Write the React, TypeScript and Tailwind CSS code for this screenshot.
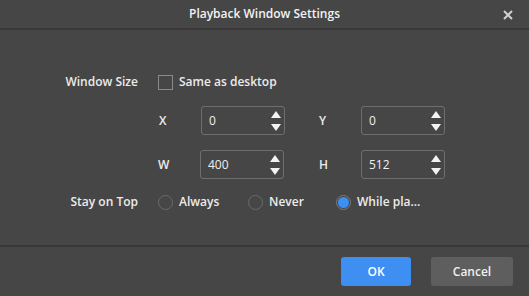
import { useState } from 'react';

const font = { fontFamily: '"Open Sans", "Noto Sans", Arial, sans-serif' };

const Spinner = () => (
  <div className="flex flex-col items-center gap-[6px] pr-[3px]">
    <svg width="10" height="7" viewBox="0 0 10 7">
      <polygon points="5,0 10,7 0,7" fill="#f2f2f2" />
    </svg>
    <svg width="10" height="7" viewBox="0 0 10 7">
      <polygon points="0,0 10,0 5,7" fill="#f2f2f2" />
    </svg>
  </div>
);

const NumberField = ({ label, value }: { label: string; value: string }) => (
  <div className="flex items-center">
    <span className="w-[43px] pl-px text-[12px] font-semibold text-[#ececec]">
      {label}
    </span>
    <div className="flex h-[29px] w-[84px] items-center justify-between rounded-[3px] border border-[#6e6e6e] pl-[7px]">
      <span className="text-[12px] text-[#f0f0f0]">{value}</span>
      <Spinner />
    </div>
  </div>
);

const Radio = ({
  label,
  checked,
  onClick,
  className,
}: {
  label: string;
  checked: boolean;
  onClick: () => void;
  className: string;
}) => (
  <button onClick={onClick} className={`flex items-center gap-[6px] ${className}`}>
    <span
      className={`flex size-[15px] items-center justify-center rounded-full border ${
        checked ? 'border-[#7a7a7a]' : 'border-[#6a6a6a]'
      }`}
    >
      {checked && <span className="size-[11px] rounded-full bg-[#3f8ef2]" />}
    </span>
    <span className="text-[12px] font-semibold text-[#ececec]">{label}</span>
  </button>
);

export default function App() {
  const [stay, setStay] = useState('while');

  return (
    <div
      className="flex h-[296px] w-[529px] flex-col bg-[#464646] text-white"
      style={font}
    >
      <div className="relative flex h-[30px] shrink-0 items-center justify-center border-b-2 border-[#383838]">
        <span className="text-[12px] font-semibold text-[#f2f2f2]">
          Playback Window Settings
        </span>
        <svg
          className="absolute right-[16px] top-[10px]"
          width="10"
          height="10"
          viewBox="0 0 10 10"
        >
          <path d="M1 1 L9 9 M9 1 L1 9" stroke="#d0d0d0" strokeWidth="2" />
        </svg>
      </div>

      <div className="flex flex-1 flex-col pt-[40px]">
        <div className="flex h-[24px] items-center">
          <span className="w-[138px] text-right text-[12px] font-semibold text-[#ececec]">
            Window Size
          </span>
          <div className="ml-[20px] flex items-center gap-[6px]">
            <span className="size-[15px] border border-[#8a8a8a]" />
            <span className="text-[12px] font-semibold text-[#ececec]">
              Same as desktop
            </span>
          </div>
        </div>

        <div className="ml-[158px] mt-[12px] flex gap-[33px]">
          <NumberField label="X" value="0" />
          <NumberField label="Y" value="0" />
        </div>
        <div className="ml-[157px] mt-[15px] flex gap-[34px]">
          <NumberField label="W" value="400" />
          <NumberField label="H" value="512" />
        </div>

        <div className="mt-[13px] flex h-[20px] items-center">
          <span className="w-[138px] text-right text-[12px] font-semibold text-[#ececec]">
            Stay on Top
          </span>
          <div className="ml-[20px] flex items-center">
            <Radio
              label="Always"
              checked={stay === 'always'}
              onClick={() => setStay('always')}
              className="w-[90px]"
            />
            <Radio
              label="Never"
              checked={stay === 'never'}
              onClick={() => setStay('never')}
              className="w-[88px]"
            />
            <Radio
              label="While pla..."
              checked={stay === 'while'}
              onClick={() => setStay('while')}
              className=""
            />
          </div>
        </div>
      </div>

      <div className="flex h-[51px] shrink-0 items-center justify-end gap-[20px] border-t-2 border-[#383838] pr-[16px]">
        <button className="h-[29px] w-[70px] rounded-[3px] bg-[#3f8ef2] text-[12px] font-semibold text-white">
          OK
        </button>
        <button className="h-[29px] w-[82px] rounded-[3px] bg-[#5e5e5e] text-[12px] font-semibold text-[#f0f0f0]">
          Cancel
        </button>
      </div>
    </div>
  );
}
